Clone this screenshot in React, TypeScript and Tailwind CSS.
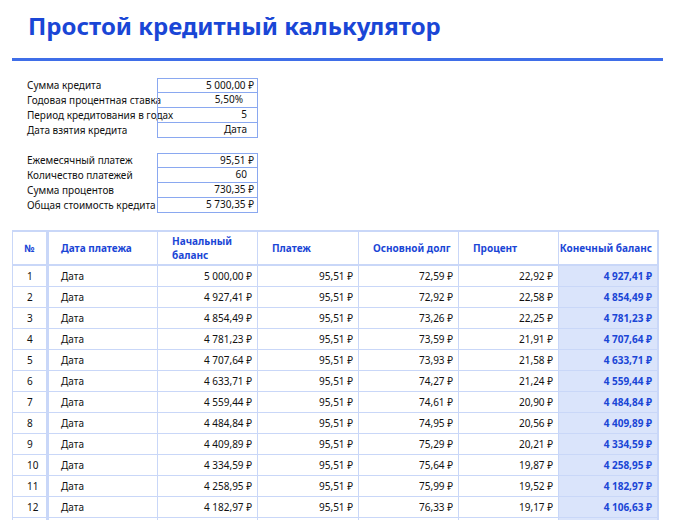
import React from "react";

const fmt = (n: number) => {
  const [i, d] = n.toFixed(2).split(".");
  return i.replace(/\B(?=(\d{3})+(?!\d))/g, " ") + "," + d + " ₽";
};

const r0 = 0.055 / 12;
const pay = (5000 * r0) / (1 - Math.pow(1 + r0, -60));
const rows: { n: number; start: number; pr: number; int: number; end: number }[] = [];
let bal = 5000;
for (let k = 1; k <= 14; k++) {
  const int = bal * r0;
  const pr = pay - int;
  const end = bal - pr;
  rows.push({ n: k, start: bal, pr, int, end });
  bal = end;
}

const inputs1 = [
  ["Сумма кредита", "5 000,00 ₽", "pr-[3px]"],
  ["Годовая процентная ставка", "5,50%", "pr-[14px]"],
  ["Период кредитования в годах", "5", "pr-[10px]"],
  ["Дата взятия кредита", "Дата", "pr-[10px]"],
];
const inputs2 = [
  ["Ежемесячный платеж", "95,51 ₽", "pr-[3px]"],
  ["Количество платежей", "60", "pr-[10px]"],
  ["Сумма процентов", "730,35 ₽", "pr-[3px]"],
  ["Общая стоимость кредита", "5 730,35 ₽", "pr-[3px]"],
];

function Group({ items }: { items: string[][] }) {
  return (
    <div className="flex flex-col">
      {items.map(([l, v, c], i) => (
        <div key={i} className="flex h-[15px] items-center whitespace-nowrap">
          <div className="w-[130px]">{l}</div>
          <div className={`w-[101px] h-[15px] border border-[#8aa8f0] ${i > 0 ? "border-t-0" : ""} leading-[13px] text-right ${c}`}>{v}</div>
        </div>
      ))}
    </div>
  );
}

export default function App() {
  const cell = "border-r border-[#c9d7f8] px-[5px]";
  return (
    <div className="w-[675px] h-[520px] overflow-hidden bg-white text-[#111] text-[10px] whitespace-nowrap" style={{ fontFamily: "'Noto Sans', 'Open Sans', sans-serif" }}>
      <div className="pl-[28px] pt-[8px] h-[58px] text-[#1a46d6] text-[24px] font-bold">Простой кредитный калькулятор</div>
      <div className="mx-[12px] h-[3px] bg-[#3f6ee8]" />
      <div className="pl-[27px] pt-[17px] flex flex-col gap-[15px]">
        <Group items={inputs1} />
        <Group items={inputs2} />
      </div>
      <div className="mx-[12px] mt-[17px] border-t-2 border-[#5580ec] border-l border-[#c9d7f8] w-[647px]">
        <div className="flex h-[34px] items-center text-[#1a46d6] font-bold border-b-2 border-[#c9d7f8] leading-[14px]">
          <div className="w-[36px] h-full flex items-center justify-center border-r-[3px] border-[#c9d7f8]">№</div>
          <div className={`w-[109px] h-full flex items-center pl-[12px] ${cell}`}>Дата платежа</div>
          <div className={`w-[100px] h-full flex items-center pl-[14px] ${cell}`}>Начальный<br />баланс</div>
          <div className={`w-[101px] h-full flex items-center pl-[14px] ${cell}`}>Платеж</div>
          <div className={`w-[100px] h-full flex items-center pl-[14px] ${cell}`}>Основной долг</div>
          <div className={`w-[100px] h-full flex items-center pl-[14px] ${cell}`}>Процент</div>
          <div className="w-[100px] h-full flex items-center justify-end pr-[5px] border-r-2 border-[#c9d7f8]">Конечный баланс</div>
        </div>
        {rows.map((r) => (
          <div key={r.n} className="flex h-[21px] items-center border-b border-[#c9d7f8]">
            <div className="w-[36px] h-full flex items-center pl-[14px] border-r-[3px] border-[#c9d7f8]">{r.n}</div>
            <div className={`w-[109px] h-full flex items-center pl-[12px] ${cell}`}>Дата</div>
            <div className={`w-[100px] h-full flex items-center justify-end ${cell}`}>{fmt(r.start)}</div>
            <div className={`w-[101px] h-full flex items-center justify-end ${cell}`}>95,51 ₽</div>
            <div className={`w-[100px] h-full flex items-center justify-end ${cell}`}>{fmt(r.pr)}</div>
            <div className={`w-[100px] h-full flex items-center justify-end ${cell}`}>{fmt(r.int)}</div>
            <div className="w-[100px] h-full flex items-center justify-end pr-[5px] bg-[#dae4fb] text-[#1a46d6] font-bold border-r-2 border-[#c9d7f8]">{fmt(r.end)}</div>
          </div>
        ))}
      </div>
    </div>
  );
}
